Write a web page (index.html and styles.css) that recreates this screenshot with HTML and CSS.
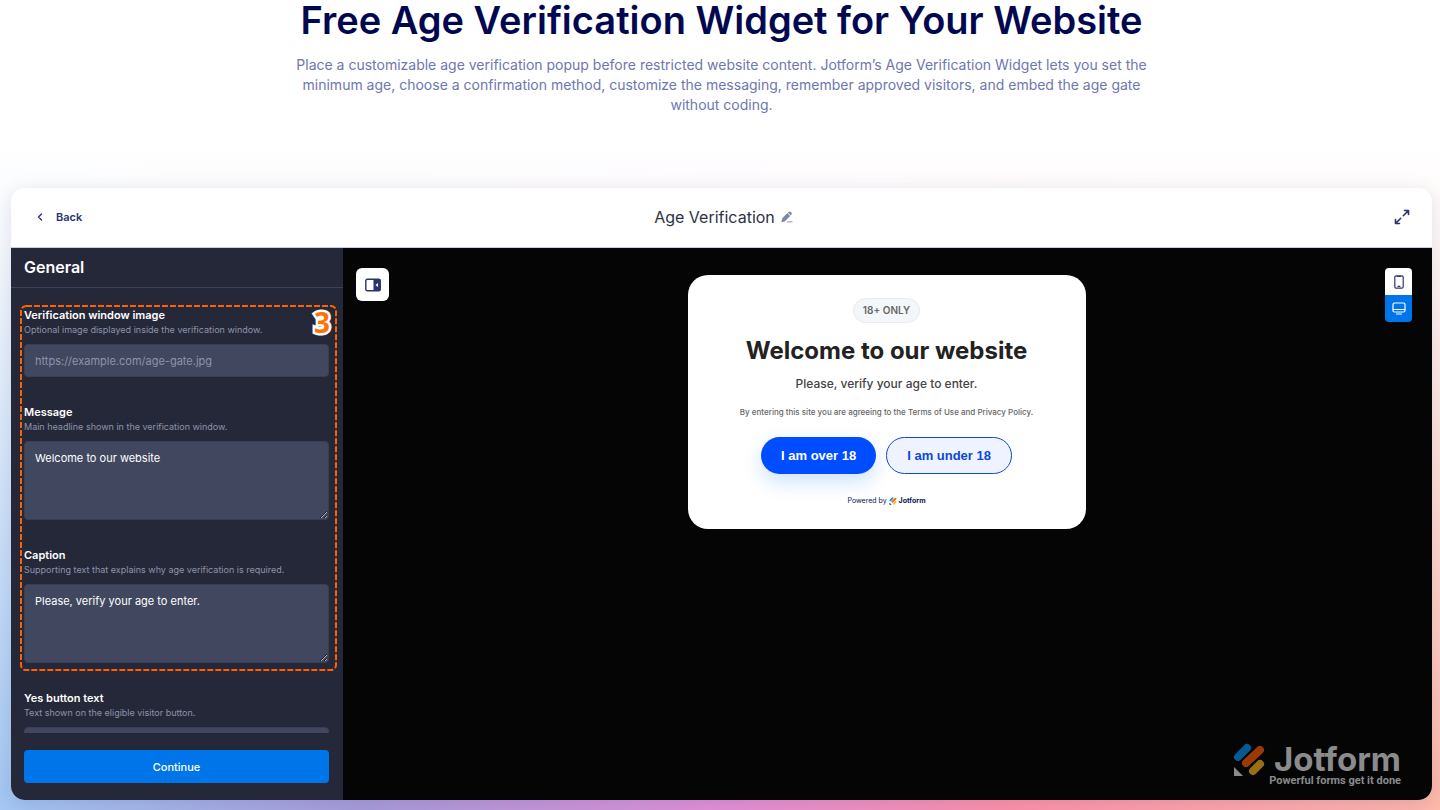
FILE: index.html
```html
<!DOCTYPE html>
<html lang="en">
<head>
    <meta charset="UTF-8">
    <meta name="viewport" content="width=device-width, initial-scale=1.0">
    <title>Free Age Verification Widget</title>
    <link rel="stylesheet" href="styles.css">
</head>

<body>

    <header class="hero">
        <h1>Free Age Verification Widget for Your Website</h1>
        <p>Place a customizable age verification popup before restricted website content. Jotform’s Age Verification Widget lets you set the minimum age, choose a confirmation method, customize the messaging, remember approved visitors, and embed the age gate without coding.</p>
    </header>

    <main class="widget">
        <div class="topbar">
            <button class="back" type="button">
                <svg width="6" height="8" viewBox="0 0 6 8" fill="none" stroke="currentColor" stroke-width="1.4" stroke-linecap="round" stroke-linejoin="round"><path d="M4.5 1 1.5 4l3 3"/></svg>
                Back
            </button>
            <div class="title">
                <h2>Age Verification</h2>
                <button class="icon-btn" type="button" aria-label="Edit name">
                    <svg width="12" height="12" viewBox="0 0 12 12" fill="#7c85ad"><path d="M7.3 1.1a1.7 1.7 0 0 1 2.4 0l.5.5a1.7 1.7 0 0 1 0 2.4l-.4.4-2.9-2.9zM6.3 2.1l2.9 2.9-5.300 5.300-2.700.9c-.5.1-.9-.2-.7-.7l.7-3z"/><rect x="6" y="10.200" width="5.500" height="1.200" rx=".5" opacity=".7"/></svg>
                </button>
            </div>
            <button class="icon-btn expand" type="button" aria-label="Full screen">
                <svg width="16" height="16" viewBox="0 0 16 16" fill="none" stroke="#2b3370" stroke-width="1.600" stroke-linecap="round" stroke-linejoin="round"><path d="M10.500 1.500h4v4M14.200 1.800 9.300 6.700M5.500 14.500h-4v-4M1.800 14.200l4.900-4.900"/></svg>
            </button>
        </div>

        <div class="content">
            <form class="sidebar">
                <h3>General</h3>
                <div class="fields">
                    <div class="field">
                        <label for="image">Verification window image</label>
                        <p class="hint">Optional image displayed inside the verification window.</p>
                        <input type="text" id="image" placeholder="https://example.com/age-gate.jpg">
                    </div>
                    <div class="field">
                        <label for="message">Message</label>
                        <p class="hint">Main headline shown in the verification window.</p>
                        <textarea id="message">Welcome to our website</textarea>
                    </div>
                    <div class="field">
                        <label for="caption">Caption</label>
                        <p class="hint">Supporting text that explains why age verification is required.</p>
                        <textarea id="caption">Please, verify your age to enter.</textarea>
                    </div>
                    <div class="field">
                        <label for="yes">Yes button text</label>
                        <p class="hint">Text shown on the eligible visitor button.</p>
                        <input type="text" id="yes">
                    </div>
                    <div class="marker">
                        <svg><rect x="2" y="2" rx="5"/></svg>
                        <span class="step">3</span>
                    </div>
                </div>
                <button class="continue" type="button">Continue</button>
            </form>

            <section class="preview">
                <button class="toggle" type="button" aria-label="Hide panel">
                    <svg width="16" height="14" viewBox="0 0 16 14"><rect x=".8" y="1.300" width="14.400" height="11.400" rx="1.500" fill="#fff" stroke="#2b3370" stroke-width="1.400"/><path d="M8.500 1h5.500q1.500 0 1.500 1.500v9q0 1.500-1.500 1.500H8.500z" fill="#2b3370"/><path d="M13 5v4l-2.500-2z" fill="#fff"/></svg>
                </button>

                <div class="popup">
                    <span class="badge">18+ ONLY</span>
                    <h2>Welcome to our website</h2>
                    <p class="caption">Please, verify your age to enter.</p>
                    <p class="terms">By entering this site you are agreeing to the Terms of Use and Privacy Policy.</p>
                    <div class="actions">
                        <button class="yes" type="button">I am over 18</button>
                        <button class="no" type="button">I am under 18</button>
                    </div>
                    <div class="powered">
                        Powered by
                        <svg width="8" height="8" viewBox="0 0 32 34" stroke-width="8" stroke-linecap="round"><path d="M5 14 14 5" stroke="#0099ff"/><path d="M13 20 27 7" stroke="#ff6100"/><path d="M20 28l7-7" stroke="#ffb629"/><path d="M1 24v9h9z" fill="#0a1551"/></svg>
                        <b>Jotform</b>
                    </div>
                </div>

                <div class="devices">
                    <button type="button" aria-label="Phone">
                        <svg width="10" height="14" viewBox="0 0 10 14" fill="none" stroke="#2b3370" stroke-width="1.200" stroke-linecap="round"><rect x=".8" y=".8" width="8.400" height="12.400" rx="1.500"/><path d="M3.500 1.500h3M4 11.300h2"/></svg>
                    </button>
                    <button class="active" type="button" aria-label="Desktop">
                        <svg width="14" height="13" viewBox="0 0 14 13" fill="none" stroke="#fff" stroke-width="1.200" stroke-linecap="round"><rect x="1" y="1" width="12" height="9" rx="1.500"/><path d="M1 7.500h12M4.500 12h5"/></svg>
                    </button>
                </div>

                <div class="watermark">
                    <svg width="32" height="34" viewBox="0 0 32 34" stroke-width="8" stroke-linecap="round"><path d="M5 14 14 5" stroke="#065a94"/><path d="M13 20 27 7" stroke="#9a3b06"/><path d="M20 28l7-7" stroke="#9a6d18"/><path d="M1 24v9h9z" fill="#8b8b8b"/></svg>
                    <div class="brand">
                        <b>Jotform</b>
                        <span>Powerful forms get it done</span>
                    </div>
                </div>
            </section>
        </div>
    </main>

</body>
</html>
```
FILE: styles.css
```css
* {
    margin: 0;
    padding: 0;
    box-sizing: border-box;
}

body {
    height: 100vh;
    display: flex;
    flex-direction: column;
    padding: 0 8px 10px 11px;
    overflow: hidden;
    font-family: Inter, 'Liberation Sans', sans-serif;
    color: #0a1551;
    background:
        linear-gradient(#fff 18%, rgba(255, 255, 255, 0.9) 30%, rgba(255, 255, 255, 0) 98%),
        linear-gradient(90deg, #a5c8f3, #a99ddb 25%, #e591d8 50%, #ff93ab 70%, #ffb9ab);
}

button,
input,
textarea {
    font-family: inherit;
    border: none;
}

button {
    cursor: pointer;
}

svg {
    display: block;
}

.hero {
    text-align: center;
    margin-bottom: 73px;
}

.hero h1 {
    font-size: 38px;
    line-height: 40px;
    margin-bottom: 15px;
    font-weight: 600;
    color: #02084f;
}

.hero p {
    max-width: 860px;
    margin: 0 auto;
    font-size: 14px;
    line-height: 20px;
    color: #6f76b0;
}

.widget {
    flex: 1;
    min-height: 0;
    display: flex;
    flex-direction: column;
    border-radius: 14px;
    overflow: hidden;
    background: #fff;
    box-shadow: 0 4px 20px rgba(10, 21, 81, 0.12);
}

.topbar {
    height: 60px;
    display: grid;
    grid-template-columns: 1fr auto 1fr;
    align-items: center;
    padding: 0 22px 2px 26px;
    border-bottom: 1px solid #c8cedd;
}

.back {
    display: flex;
    align-items: center;
    gap: 13px;
    justify-self: start;
    font-size: 11px;
    font-weight: 600;
    color: #2b3370;
    background: none;
}

.title {
    display: flex;
    align-items: center;
    gap: 6px;
}

.title h2 {
    font-size: 16px;
    font-weight: 400;
    color: #2c3345;
}

.icon-btn {
    background: none;
}

.expand {
    justify-self: end;
}

.content {
    flex: 1;
    min-height: 0;
    display: flex;
}

.sidebar {
    width: 332px;
    display: flex;
    flex-direction: column;
    background: #252839;
    color: #fff;
}

.sidebar h3 {
    padding: 0 13px;
    font-size: 16px;
    line-height: 39px;
    font-weight: 600;
    border-bottom: 1px solid #3d425a;
}

.fields {
    position: relative;
    flex: 1;
    min-height: 0;
    padding: 19px 14px 0 13px;
    overflow: hidden;
}

.field {
    margin-bottom: 27px;
}

.field label {
    display: block;
    font-size: 11px;
    line-height: 16px;
    font-weight: 600;
}

.hint {
    font-size: 9px;
    line-height: 14px;
    margin-bottom: 7px;
    color: #8d94ab;
}

.field input,
.field textarea {
    display: block;
    width: 100%;
    padding: 8px 10px;
    font-size: 11px;
    line-height: 16px;
    color: #fff;
    background: #41475f;
    border: 1px solid #393f56;
    border-radius: 4px;
}

.field input {
    height: 33px;
}

.field textarea {
    height: 79px;
}

.field input::placeholder {
    color: #8d94ab;
}

/* dashed highlight around the first three fields */
.marker {
    position: absolute;
    top: 16px;
    left: 8px;
    width: 319px;
    height: 368px;
    pointer-events: none;
}

.marker svg {
    width: 100%;
    height: 100%;
}

.marker rect {
    width: calc(100% - 4px);
    height: calc(100% - 4px);
    fill: none;
    stroke: #ff6100;
    stroke-width: 2;
    stroke-dasharray: 6 2;
}

.step {
    position: absolute;
    top: 4px;
    right: 8px;
    font-family: 'Noto Sans', 'Open Sans', sans-serif;
    font-size: 28px;
    line-height: 28px;
    font-weight: 700;
    color: #ff7100;
    -webkit-text-stroke: 5px #fff;
    paint-order: stroke fill;
}

.continue {
    height: 33px;
    margin: 17px 14px 17px 13px;
    font-size: 11px;
    font-weight: 500;
    color: #fff;
    background: #0075e9;
    border-radius: 4px;
}

.preview {
    position: relative;
    flex: 1;
    padding: 27px 22px 27px 20px;
    background: #050505;
}

.toggle {
    position: absolute;
    top: 20px;
    left: 13px;
    width: 33px;
    height: 33px;
    display: grid;
    place-items: center;
    background: #fff;
    border-radius: 6px;
}

.popup {
    width: 398px;
    margin: 0 auto;
    padding: 23px 24px;
    display: flex;
    flex-direction: column;
    align-items: center;
    text-align: center;
    background: #fff;
    border-radius: 20px;
}

.badge {
    padding: 0 9px;
    font-size: 10px;
    line-height: 23px;
    font-weight: 600;
    color: #666;
    background: #f4f7fa;
    border: 1px solid #e8ebef;
    border-radius: 20px;
}

.popup h2 {
    margin-top: 12px;
    font-size: 24px;
    line-height: 32px;
    font-weight: 700;
    color: #222;
}

.caption {
    margin-top: 9px;
    font-size: 12px;
    line-height: 16px;
    font-weight: 500;
    color: #444;
}

.terms {
    margin-top: 14px;
    font-size: 8px;
    line-height: 12px;
    font-weight: 500;
    color: #666;
}

.actions {
    display: flex;
    gap: 10px;
    margin-top: 19px;
}

.actions button {
    height: 37px;
    padding: 0 20px;
    font-family: 'Liberation Sans', sans-serif;
    font-size: 13px;
    font-weight: 700;
    border-radius: 20px;
}

.actions .yes {
    color: #fff;
    background: #004dff;
    box-shadow: 0 8px 20px rgba(0, 117, 233, 0.2);
}

.actions .no {
    color: #0a49d8;
    background: #eff3ff;
    border: 1px solid #0a49d8;
}

.powered {
    display: flex;
    align-items: center;
    gap: 2px;
    margin-top: 22px;
    font-size: 7px;
    line-height: 10px;
}

.devices {
    position: absolute;
    top: 20px;
    right: 20px;
    width: 27px;
    border-radius: 4px;
    overflow: hidden;
}

.devices button {
    width: 100%;
    height: 27px;
    display: grid;
    place-items: center;
    background: #fff;
}

.devices .active {
    background: #0075e9;
}

.watermark {
    position: absolute;
    right: 31px;
    bottom: 13px;
    display: flex;
    gap: 4px;
    color: #8b8b8b;
}

.brand {
    display: flex;
    flex-direction: column;
    align-items: flex-end;
}

.brand b {
    font-size: 33px;
    line-height: 32px;
}

.brand span {
    font-family: Roboto, 'Liberation Sans', sans-serif;
    font-size: 11px;
    line-height: 12px;
    font-weight: 700;
}
```
